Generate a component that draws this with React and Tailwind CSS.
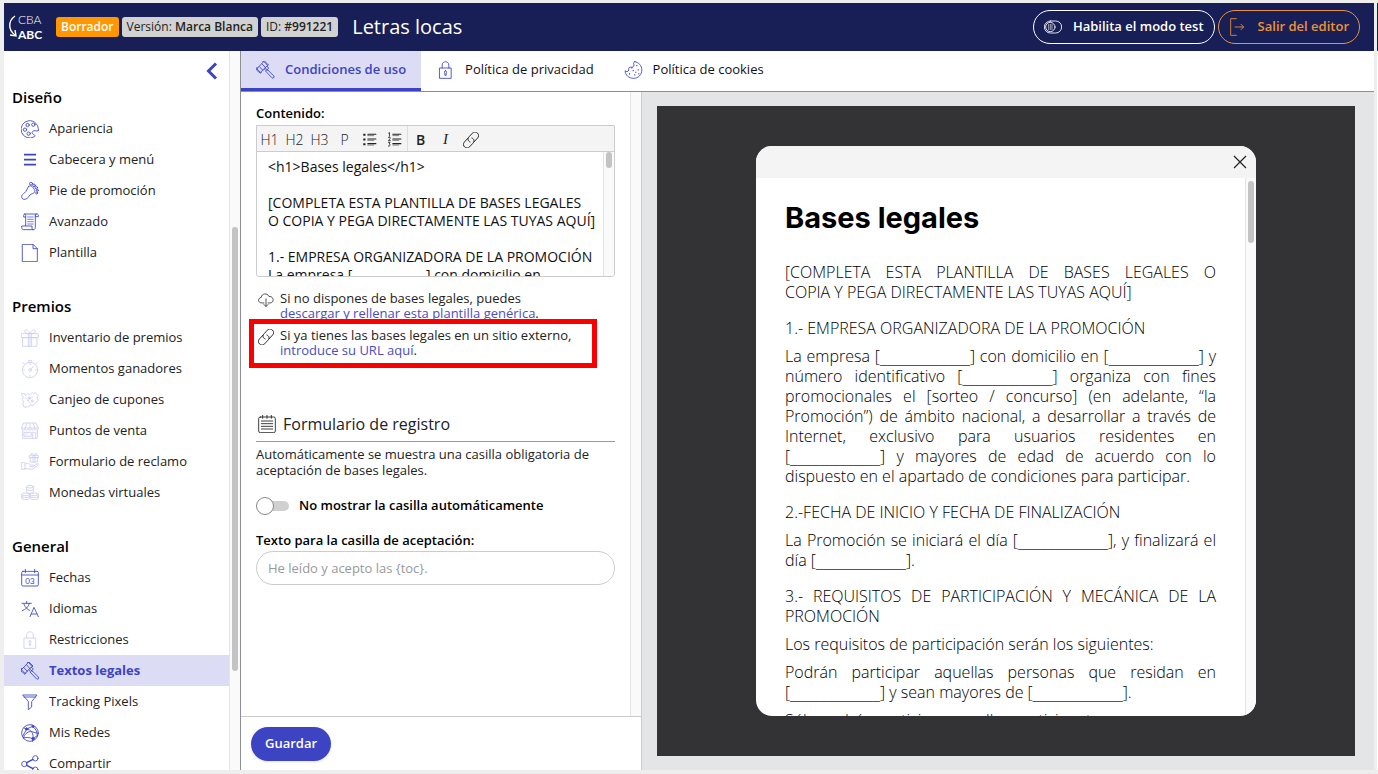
import React from "react";

function Svg({ children, className = "", size = "h-[18px] w-[18px]" }) {
  return (
    <svg
      viewBox="0 0 54 54"
      className={`${size} shrink-0 ${className}`}
      fill="none"
      stroke="currentColor"
      strokeWidth="2.6"
      strokeLinecap="round"
      strokeLinejoin="round"
      aria-hidden="true"
    >
      {children}
    </svg>
  );
}

const shapes = {
  palette: (
    <>
      <path d="M52 31A26 26 0 1 0 40 50C44 48 41 44 37 43C31 41 33 33 39 32C44 31 47 36 52 31Z" />
      <circle cx="20" cy="15" r="5" />
      <circle cx="37" cy="14" r="5" />
      <circle cx="12" cy="29" r="5" />
      <circle cx="23" cy="41" r="5" />
    </>
  ),
  menu: <path d="M9 11H45M9 26H45M9 41H45" strokeWidth="5" strokeLinecap="butt" />,
  foot: (
    <>
      <path d="M23 13C17 20 18 27 10 33C2 38 0 45 4 50C8 54 17 52 22 46C26 40 27 37 34 35C42 33 43 27 39 21C35 14 29 8 23 13Z" />
      <circle cx="30" cy="5" r="4.5" />
      <circle cx="39" cy="10" r="4" />
      <circle cx="46" cy="17" r="3.5" />
      <circle cx="49" cy="25" r="3" />
      <circle cx="47" cy="33" r="3" />
    </>
  ),
  scroll: (
    <>
      <path d="M14 38V7C14 2 8 2 8 7V12H14M11 3H47C52 3 53 6 52 11H43M43 7V43C43 49 39 50 36 50M47 3C44 3 43 5 43 9M36 50H7C3 50 2 46 2 39H33V45C33 48 34 50 37 50" />
      <path d="M20 12H37M20 19H37M20 26H37M20 33H37" strokeWidth="2" />
    </>
  ),
  file: <path d="M5 1H36L49 14V53H5ZM36 1V14H49" />,
  gift: (
    <>
      <path d="M2 14H52V26H2ZM6 26H48V52H6ZM22 14V52M32 14V52M27 14V52" />
      <path d="M27 13C20 0 10 -1 11 8C12 12 20 14 27 13C34 14 42 12 43 8C44 -1 34 0 27 13" />
    </>
  ),
  timer: (
    <>
      <circle cx="27" cy="30" r="23" />
      <path d="M23 7V1H31V7M44 12L48 8M6 8L10 12M27 11V14M27 46V49M8 30H11M43 30H46M30 27L37 19" />
      <circle cx="27" cy="30" r="4" />
    </>
  ),
  coupon: (
    <>
      <path d="M3 8H11L13 13L20 8L27 11L34 4L38 8L43 5L51 14L48 21L52 28L33 45L29 40L23 48H8V42L5 38L8 31L4 26L7 18L3 14Z" />
      <path d="M20 29L36 17M14 20L28 39" strokeDasharray="4 4" />
      <circle cx="24" cy="21" r="3" />
      <circle cx="34" cy="30" r="3" />
    </>
  ),
  store: (
    <>
      <path d="M9 3H45L52 18C52 26 43 26 42 20C40 26 33 26 32 20C31 26 23 26 22 20C21 26 13 26 12 20C11 26 2 26 2 18ZM2 18H52M18 4L12 19M27 4V19M36 4L42 19M5 25V49H49V25" />
      <path d="M10 31H31V43H10ZM35 49V31H44V49M14 39L20 33" />
    </>
  ),
  handGift: (
    <>
      <path d="M26 7H52V14H26ZM29 14H49V27H29ZM36 7V27M42 7V27M39 7C34 -2 29 -1 31 5M39 7C44 -2 49 -1 47 5" />
      <path d="M2 29H12V49H2ZM12 34C19 28 24 32 28 36H37C42 36 41 41 37 41H26M40 38L49 32C53 30 54 34 51 37L37 47C29 50 22 48 12 46" />
    </>
  ),
  coins: (
    <>
      <ellipse cx="27" cy="8" rx="10" ry="4" />
      <path d="M17 8V24C17 29 37 29 37 24V8M17 16C17 21 37 21 37 16" />
      <ellipse cx="14" cy="31" rx="12" ry="4" />
      <path d="M2 31V43C2 48 26 48 26 43V31M2 37C2 42 26 42 26 37" />
      <ellipse cx="40" cy="31" rx="12" ry="4" />
      <path d="M28 31V43C28 48 52 48 52 43V31M28 37C28 42 52 42 52 37" />
    </>
  ),
  languages: (
    <>
      <path d="M3 10H31M17 4V10M25 10C23 21 14 28 4 32M9 13C12 22 20 29 26 31" />
      <path d="M27 50L39 22L52 50M31 42H47" />
    </>
  ),
  lock: (
    <>
      <path d="M10 21H44V52H10ZM17 21V12C17 -1 37 -1 37 12V21" />
      <path d="M27 29C31 29 31 34 29 36V43H25V36C23 34 23 29 27 29Z" />
    </>
  ),
  gavel: (
    <>
      <path d="M23 2L33 13L12 34L2 24ZM19 2L24 0L36 12L32 16M0 22L2 19M2 22L0 27L12 37L15 33M17 9L27 20M9 17L19 28" />
      <path d="M32 17L37 21L29 29L24 25M33 26L52 45C55 49 50 54 46 50L28 31M27 22L34 28" />
    </>
  ),
  funnel: <path d="M6 6H48L32 26V42L22 50V26ZM9 12H44" />,
  network: (
    <>
      <circle cx="27" cy="27" r="25" />
      <path d="M17 15L35 7M17 15L5 37M17 15C32 18 38 29 36 44M36 44C26 40 14 39 7 42M36 44L49 35M35 7C45 14 49 25 49 35M17 15L9 12M36 44L34 52M35 7L33 3M7 42C10 31 18 24 29 22L49 28" />
      <circle cx="17" cy="15" r="3.5" fill="currentColor" />
      <circle cx="36" cy="44" r="3.5" fill="currentColor" />
      <circle cx="36" cy="8" r="2.5" fill="currentColor" />
    </>
  ),
  share: (
    <>
      <circle cx="43" cy="10" r="8" />
      <circle cx="10" cy="27" r="8" />
      <circle cx="43" cy="44" r="8" />
      <path d="M17 23L36 13M17 31L36 41" strokeWidth="4" />
    </>
  ),
  cookie: (
    <>
      <path d="M31 2C43 4 52 14 52 27C52 41 41 52 27 52C13 52 2 42 2 29C5 33 11 33 13 27C10 22 15 16 21 19C27 19 31 13 27 8C27 5 29 3 31 2Z" />
      <path d="M37 13V14M26 28V29M41 26V27M15 38V39M31 41V42M22 20V21M43 38V39M34 33V34" strokeWidth="3.5" />
    </>
  ),
  link: (
    <g transform="rotate(-48 27 27)" strokeWidth="3">
      <path d="M26 15H7C-9 15 -9 39 7 39H23C33 39 37 32 34 25" />
      <path d="M28 39H47C63 39 63 15 47 15H31C21 15 17 22 20 29" />
    </g>
  ),
  cloud: <path d="M20 37H14C-2 37 -1 20 11 18C12 5 31 2 37 15C54 13 56 37 40 37H34M27 23V48M20 42L27 49L34 42" />,
  notepad: (
    <>
      <rect x="2" y="6" width="50" height="47" rx="5" />
      <path d="M10 18H44M10 26H44M10 34H44M10 42H44M14 1V10M27 1V10M40 1V10" />
    </>
  ),
  bullets: (
    <>
      <path d="M8 10H9M8 27H9M8 44H9" strokeWidth="7" strokeLinecap="square" />
      <path d="M21 8H50M21 25H50M21 42H50" strokeWidth="4" />
      <path d="M21 13H42M21 30H42M21 47H42" strokeWidth="2" />
    </>
  ),
  toggleOff: (
    <>
      <rect x="1" y="9" width="52" height="36" rx="18" />
      <circle cx="19" cy="27" r="14" />
      <path d="M14 19V35M19 19V35M24 19V35" strokeWidth="1.8" />
    </>
  ),
  exit: <path d="M22 2H5V52H22M18 27H44M36 19L44 27L36 35" />,
};

function Icon({ name, className, size }) {
  return (
    <Svg className={className} size={size}>
      {shapes[name]}
    </Svg>
  );
}

function CalendarIcon() {
  return (
    <Svg className="text-[#3d44c4]">
      <rect x="2" y="7" width="50" height="44" rx="4" />
      <path d="M2 18H52M13 1V11M41 1V11" />
      <text x="27" y="44" textAnchor="middle" fontSize="24" fontFamily="Lato, sans-serif" fill="currentColor" stroke="none">
        03
      </text>
    </Svg>
  );
}

function NumberedIcon() {
  return (
    <Svg size="h-[15px] w-[15px]">
      <path d="M21 8H50M21 25H50M21 42H50" strokeWidth="4" />
      <path d="M21 13H42M21 30H42M21 47H42" strokeWidth="2" />
      <path d="M6 4L9 2V15M5 19H11V24L5 31H12M5 37H11L8 43C13 43 13 52 5 51" strokeWidth="3" />
    </Svg>
  );
}

const groups = [
  {
    title: "Diseño",
    items: [
      ["Apariencia", "palette"],
      ["Cabecera y menú", "menu"],
      ["Pie de promoción", "foot"],
      ["Avanzado", "scroll"],
      ["Plantilla", "file"],
    ],
  },
  {
    title: "Premios",
    items: [
      ["Inventario de premios", "gift", true],
      ["Momentos ganadores", "timer", true],
      ["Canjeo de cupones", "coupon", true],
      ["Puntos de venta", "store", true],
      ["Formulario de reclamo", "handGift", true],
      ["Monedas virtuales", "coins", true],
    ],
  },
  {
    title: "General",
    items: [
      ["Fechas", "calendar"],
      ["Idiomas", "languages"],
      ["Restricciones", "lock", true],
      ["Textos legales", "gavel"],
      ["Tracking Pixels", "funnel"],
      ["Mis Redes", "network"],
      ["Compartir", "share"],
    ],
  },
];

function Sidebar() {
  return (
    <aside className="flex min-h-0 w-[236px] shrink-0">
      <nav className="min-w-0 flex-1 overflow-hidden" aria-label="Secciones">
        <div className="flex h-[31px] items-end justify-end pr-[11px]">
          <button type="button" aria-label="Contraer menú" className="pb-[2px] text-[#3d44c4]">
            <svg viewBox="0 0 12 18" className="h-[18px] w-3" fill="none" stroke="currentColor" strokeWidth="3" aria-hidden="true">
              <path d="M10 1.5L2.5 9L10 16.5" />
            </svg>
          </button>
        </div>
        <div className="flex flex-col gap-[23px]">
          {groups.map((group) => (
            <section key={group.title}>
              <h2 className="flex h-[31px] items-center pl-2 text-[15px] font-semibold text-black">{group.title}</h2>
              <ul>
                {group.items.map(([label, icon, faded]) => {
                  const active = label === "Textos legales";
                  return (
                    <li key={label}>
                      <a
                        href="#"
                        aria-current={active ? "page" : undefined}
                        className={`flex h-[31px] items-center gap-[10px] pl-[17px] text-[13px] ${
                          active ? "bg-[#dcdcf4] font-bold text-[#3d44c4]" : "text-[#222]"
                        }`}
                      >
                        {icon === "calendar" ? (
                          <CalendarIcon />
                        ) : (
                          <Icon name={icon} className={faded ? "text-[#cdcef0]" : "text-[#3d44c4]"} />
                        )}
                        {label}
                      </a>
                    </li>
                  );
                })}
              </ul>
            </section>
          ))}
        </div>
      </nav>
      <div className="flex w-[11px] flex-col items-center border-l border-[#e4e4e4] bg-[#fafafa]">
        <div className="grow-[176]" />
        <div className="w-[6px] grow-[444] rounded-full bg-[#c4c4c4]" />
        <div className="grow-[99]" />
      </div>
    </aside>
  );
}

const terms = `<h1>Bases legales</h1>

[COMPLETA ESTA PLANTILLA DE BASES LEGALES
O COPIA Y PEGA DIRECTAMENTE LAS TUYAS AQUÍ]

1.- EMPRESA ORGANIZADORA DE LA PROMOCIÓN
La empresa [____________] con domicilio en`;

function ToolButton({ label, children, className = "" }) {
  return (
    <button type="button" aria-label={label} className={`flex w-[25px] items-center justify-center pt-[2px] ${className}`}>
      {children}
    </button>
  );
}

function Editor() {
  return (
    <div>
      <label htmlFor="contenido" className="block h-5 text-[13px] leading-4 font-semibold text-black">
        Contenido:
      </label>
      <div className="overflow-hidden rounded-b-[3px] border border-[#ccc]">
        <div className="flex h-[26px] border-b border-[#ccc] bg-[#f4f4f4] text-[14px] text-[#222]">
          <ToolButton label="Título 1" className="font-light">H1</ToolButton>
          <ToolButton label="Título 2" className="font-light">H2</ToolButton>
          <ToolButton label="Título 3" className="font-light">H3</ToolButton>
          <ToolButton label="Párrafo" className="font-light">P</ToolButton>
          <ToolButton label="Lista">
            <Icon name="bullets" size="h-[15px] w-[15px]" />
          </ToolButton>
          <ToolButton label="Lista numerada">
            <NumberedIcon />
          </ToolButton>
          <div className="border-l border-[#ddd]" />
          <ToolButton label="Negrita" className="font-semibold">B</ToolButton>
          <ToolButton label="Cursiva" className="font-['Liberation_Serif',serif] text-[15px] italic">I</ToolButton>
          <ToolButton label="Enlace">
            <Icon name="link" size="h-4 w-4" />
          </ToolButton>
        </div>
        <div className="flex h-[124px]">
          <textarea
            id="contenido"
            defaultValue={terms}
            className="min-w-0 flex-1 resize-none overflow-hidden whitespace-pre pt-[6px] pl-[11px] text-[14px] leading-[18px] text-[#111] outline-none"
          />
          <div className="w-[11px] border-l border-[#e4e4e4] bg-[#fafafa]">
            <div className="mx-auto h-4 w-[6px] rounded-full bg-[#c4c4c4]" />
          </div>
        </div>
      </div>
    </div>
  );
}

function SettingsPanel() {
  return (
    <section className="flex w-[401px] shrink-0 flex-col border-r border-[#ccc]">
      <div className="flex min-h-0 flex-1">
        <div className="min-w-0 flex-1 overflow-hidden px-[15px] pt-[13px] text-[13px] text-[#222]">
          <Editor />
          <ul className="mt-[14px] flex flex-col gap-[7px] leading-[15px]">
            <li className="flex gap-[6px]">
              <Icon name="cloud" size="mt-px ml-[2px] h-4 w-4" />
              <p>
                Si no dispones de bases legales, puedes
                <br />
                <a href="#" className="text-[#4a4cc0]">descargar y rellenar esta plantilla genérica</a>.
              </p>
            </li>
            <li className="relative flex gap-[6px]">
              <Icon name="link" size="mt-px ml-[2px] h-4 w-4" />
              <p>
                Si ya tienes las bases legales en un sitio externo,
                <br />
                <a href="#" className="text-[#4a4cc0]">introduce su URL aquí</a>.
              </p>
              <div className="pointer-events-none absolute -top-[9px] right-[18px] -bottom-[10px] -left-[7px] border-[5px] border-[#fb0000]" />
            </li>
          </ul>

          <h2 className="mt-[49px] flex h-[35px] items-center gap-[7px] border-b border-[#999] pl-[2px] text-[16px]">
            <Icon name="notepad" />
            Formulario de registro
          </h2>
          <p className="mt-1 leading-4">
            Automáticamente se muestra una casilla obligatoria de aceptación de bases legales.
          </p>

          <label className="mt-[18px] flex items-center gap-[10px] font-semibold text-black">
            <input
              type="checkbox"
              className="relative h-[18px] w-[33px] shrink-0 appearance-none before:absolute before:top-1 before:left-2 before:h-[10px] before:w-[25px] before:rounded-full before:bg-[#d0d0d0] after:absolute after:top-0 after:left-0 after:h-[18px] after:w-[18px] after:rounded-full after:border after:border-[#888] after:bg-white"
            />
            No mostrar la casilla automáticamente
          </label>

          <label htmlFor="aceptacion" className="mt-4 block h-[19px] leading-4 font-semibold text-black">
            Texto para la casilla de aceptación:
          </label>
          <input
            id="aceptacion"
            type="text"
            placeholder="He leído y acepto las {toc}."
            className="h-[34px] w-full rounded-full border border-[#ccc] px-[11px] placeholder:text-[#999]"
          />
        </div>
        <div className="w-[11px] border-l border-[#e4e4e4] bg-[#fafafa]" />
      </div>
      <footer className="flex h-[54px] shrink-0 items-center border-t border-[#ccc] px-[10px]">
        <button type="button" className="h-[34px] rounded-full bg-[#3d44c4] px-[14px] text-[13px] font-semibold text-white shadow-sm">
          Guardar
        </button>
      </footer>
    </section>
  );
}

const blank = "[____________]";
const clauses = [
  ["[COMPLETA ESTA PLANTILLA DE BASES LEGALES O\nCOPIA Y PEGA DIRECTAMENTE LAS TUYAS AQUÍ]", "mt-[27px]"],
  ["1.- EMPRESA ORGANIZADORA DE LA PROMOCIÓN", "mt-4"],
  [
    `La empresa ${blank} con domicilio en ${blank} y número identificativo ${blank} organiza con fines promocionales el [sorteo / concurso] (en adelante, “la Promoción”) de ámbito nacional, a desarrollar a través de Internet, exclusivo para usuarios residentes en ${blank} y mayores de edad de acuerdo con lo dispuesto en el apartado de condiciones para participar.`,
    "mt-2",
  ],
  ["2.-FECHA DE INICIO Y FECHA DE FINALIZACIÓN", "mt-4"],
  [`La Promoción se iniciará el día ${blank}, y finalizará el día ${blank}.`, "mt-2"],
  ["3.- REQUISITOS DE PARTICIPACIÓN Y MECÁNICA DE LA PROMOCIÓN", "mt-4"],
  ["Los requisitos de participación serán los siguientes:", "mt-2"],
  [`Podrán participar aquellas personas que residan en ${blank} y sean mayores de ${blank}.`, "mt-2"],
  ["Sólo podrán participar aquellos participantes que", "mt-2"],
];

function ClauseText({ text }) {
  return text.split(/(_+)/).map((part, i) =>
    part.startsWith("_") ? (
      <span key={i} className="font-['DejaVu_Sans',sans-serif] text-[15px] leading-none">
        {part}
      </span>
    ) : (
      part
    ),
  );
}

function Clause({ text, gap }) {
  const lines = text.split("\n");
  return (
    <p className={`${gap} text-justify text-[16px] leading-5 font-light`}>
      {lines.map((line, i) => (
        <span key={line} className={i < lines.length - 1 ? "block [text-align-last:justify]" : ""}>
          <ClauseText text={line} />
        </span>
      ))}
    </p>
  );
}

function Preview() {
  return (
    <section className="min-w-0 flex-1 bg-[#e4e5e7] py-[14px] pr-[19px] pl-[15px]">
      <div className="flex h-full justify-center bg-[#333335] py-10">
        <div role="dialog" aria-label="Bases legales" className="flex w-[500px] flex-col overflow-hidden rounded-2xl bg-white">
          <div className="flex h-8 shrink-0 items-center justify-end bg-[#f4f4f4] pr-[9px]">
            <button type="button" aria-label="Cerrar" className="text-[#222]">
              <svg viewBox="0 0 14 14" className="h-[14px] w-[14px]" stroke="currentColor" strokeWidth="1.2" aria-hidden="true">
                <path d="M1 1L13 13M13 1L1 13" />
              </svg>
            </button>
          </div>
          <div className="flex min-h-0 flex-1">
            <div className="min-w-0 flex-1 overflow-hidden px-[29px] pt-[23px] text-black">
              <h1 className="font-[Inter,sans-serif] text-[29px] leading-[34px] font-bold">Bases legales</h1>
              {clauses.map(([text, gap]) => (
                <Clause key={text} text={text} gap={gap} />
              ))}
            </div>
            <div className="w-[11px] border-l border-[#e4e4e4] bg-[#fafafa] pt-[3px]">
              <div className="mx-auto h-[62px] w-[6px] rounded-full bg-[#c4c4c4]" />
            </div>
          </div>
        </div>
      </div>
    </section>
  );
}

const tabs = [
  ["Condiciones de uso", "gavel"],
  ["Política de privacidad", "lock"],
  ["Política de cookies", "cookie"],
];

function Tabs() {
  return (
    <div role="tablist" className="flex h-[41px] shrink-0 border-b border-[#8c8f93]">
      {tabs.map(([label, icon], i) => (
        <button
          key={label}
          type="button"
          role="tab"
          aria-selected={i === 0}
          className={`flex items-center gap-[10px] border-b-[3px] px-[15px] text-[13px] ${
            i === 0 ? "border-[#3d44c4] bg-[#dcdcf4] font-semibold text-[#3d44c4]" : "border-transparent text-[#111]"
          }`}
        >
          <Icon name={icon} className="text-[#3d44c4]" size="h-[18px] w-[19px]" />
          {label}
        </button>
      ))}
    </div>
  );
}

function Header() {
  return (
    <header className="flex h-12 shrink-0 items-center bg-[#181f57] pr-[14px] pl-1">
      <a href="#" aria-label="Inicio" className="flex h-9 w-9 items-center text-white">
        <svg viewBox="0 0 10 24" className="h-6 w-[10px] shrink-0" fill="none" stroke="currentColor" strokeWidth="1.4" aria-hidden="true">
          <path d="M7 1C0 6 0 15 7 20M2 20L8 21L7 15" />
        </svg>
        <span className="flex flex-col font-[Lato,sans-serif] text-[12px] leading-[15px]">
          <span className="font-light">CBA</span>
          <span className="font-bold">ABC</span>
        </span>
      </a>
      <div className="ml-3 flex gap-[3px] text-[12px] leading-5 text-[#222]">
        <span className="rounded-[3px] bg-[#ff9800] px-[5px] font-semibold text-white">Borrador</span>
        <span className="rounded-[3px] bg-[#d2d2d2] px-[5px]">
          Versión: <b className="font-semibold">Marca Blanca</b>
        </span>
        <span className="rounded-[3px] bg-[#d2d2d2] px-[5px]">
          ID: <b className="font-semibold">#991221</b>
        </span>
      </div>
      <div className="ml-[14px] text-[20px] text-white">Letras locas</div>
      <div className="ml-auto flex gap-[3px] text-[13px] font-semibold">
        <button type="button" className="flex h-[34px] items-center gap-[11px] rounded-full border border-white px-[10px] text-white">
          <Icon name="toggleOff" />
          Habilita el modo test
        </button>
        <button type="button" className="flex h-[34px] items-center gap-[11px] rounded-full border border-[#e8913c] px-[10px] text-[#ee9233]">
          <Icon name="exit" />
          Salir del editor
        </button>
      </div>
    </header>
  );
}

export default function App() {
  return (
    <div className="flex h-screen gap-[3px] overflow-hidden bg-[#eee] pt-[3px] pb-1 pl-1 font-['Open_Sans',sans-serif]">
      <div className="flex min-w-0 flex-1 flex-col bg-white">
        <Header />
        <div className="flex min-h-0 flex-1">
          <Sidebar />
          <main className="flex min-w-0 flex-1 flex-col border-l border-[#8c8f93]">
            <Tabs />
            <div className="flex min-h-0 flex-1">
              <SettingsPanel />
              <Preview />
            </div>
          </main>
        </div>
      </div>
      <div className="w-px bg-white">
        <div className="h-12 bg-[#181f57]" />
      </div>
    </div>
  );
}
